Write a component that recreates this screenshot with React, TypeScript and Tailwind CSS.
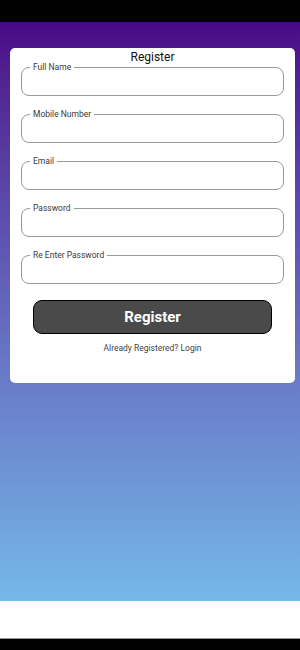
const fields = ['Full Name', 'Mobile Number', 'Email', 'Password', 'Re Enter Password'];

const Field = ({ label }: { label: string }) => (
  <fieldset className="mx-[11px] rounded-[8px] border border-[#999] px-[8px]">
    <legend className="px-[3px] text-[8.5px] leading-[10px] text-[#3a3a3a]">{label}</legend>
    <div className="h-[23px]" />
  </fieldset>
);

export default function App() {
  return (
    <div className="flex h-[650px] w-[300px] flex-col font-['Roboto',sans-serif]">
      <div className="h-[22px] bg-black" />
      <div className="flex-1 bg-gradient-to-b from-[#4a0786] via-[#6468bd] to-[#74b8e8] px-[10px] pt-[26px]">
        <div className="w-[285px] rounded-[5px] bg-white pb-[29px]">
          <h1 className="pt-[2px] text-center text-[12px] leading-[14px] text-[#111]">Register</h1>
          <div className="mt-[-2px] flex flex-col gap-[13px]">
            {fields.map((f) => (
              <Field key={f} label={f} />
            ))}
          </div>
          <div className="mt-[16px] px-[23px]">
            <button className="h-[34px] w-full rounded-[9px] border border-black bg-[#4a4a4a] text-[15px] font-bold text-white">
              Register
            </button>
          </div>
          <p className="mt-[8px] text-center text-[8.5px] leading-[12px] text-[#444]">Already Registered? Login</p>
        </div>
      </div>
      <div className="h-[37px] bg-white" />
      <div className="h-[12px] border-t border-[#999] bg-black" />
    </div>
  );
}
